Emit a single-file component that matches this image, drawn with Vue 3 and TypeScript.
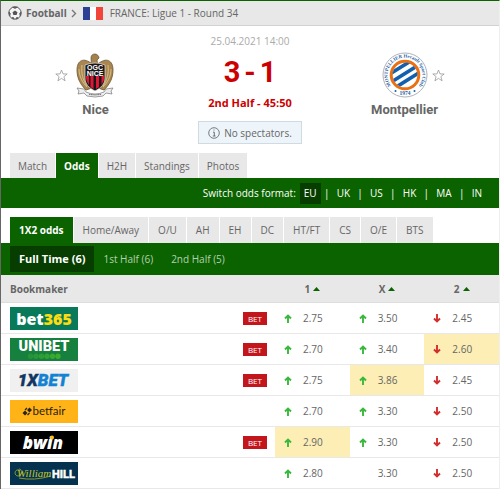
<script setup lang="ts">
import { ref } from 'vue'

type Direction = 'up' | 'down' | 'none'

interface Odd {
  value: string
  direction: Direction
  best?: boolean
}

interface BookmakerRow {
  id: string
  name: string
  bet: boolean
  odds: Odd[]
}

const mainTabs = ['Match', 'Odds', 'H2H', 'Standings', 'Photos']
const formats = ['EU', 'UK', 'US', 'HK', 'MA', 'IN']
const markets = ['1X2 odds', 'Home/Away', 'O/U', 'AH', 'EH', 'DC', 'HT/FT', 'CS', 'O/E', 'BTS']
const periods = ['Full Time (6)', '1st Half (6)', '2nd Half (5)']
const outcomes = ['1', 'X', '2']

const activeTab = ref('Odds')
const activeFormat = ref('EU')
const activeMarket = ref('1X2 odds')
const activePeriod = ref('Full Time (6)')

const up = (value: string, best = false): Odd => ({ value, direction: 'up', best })
const down = (value: string, best = false): Odd => ({ value, direction: 'down', best })
const same = (value: string): Odd => ({ value, direction: 'none' })

const rows: BookmakerRow[] = [
  { id: 'bet365', name: 'bet365', bet: true, odds: [up('2.75'), up('3.50'), down('2.45')] },
  { id: 'unibet', name: 'Unibet', bet: true, odds: [up('2.70'), up('3.40'), down('2.60', true)] },
  { id: 'xbet', name: '1xBet', bet: true, odds: [up('2.75'), up('3.86', true), down('2.45')] },
  { id: 'betfair', name: 'Betfair', bet: false, odds: [up('2.70'), up('3.30'), down('2.50')] },
  { id: 'bwin', name: 'bwin', bet: true, odds: [up('2.90', true), up('3.30'), down('2.50')] },
  { id: 'hill', name: 'William Hill', bet: false, odds: [up('2.80'), same('3.30'), down('2.50')] },
]
</script>

<template>
  <main class="page">
    <nav class="crumbs">
      <svg class="ball" viewBox="0 0 14 14" aria-hidden="true">
        <circle cx="7" cy="7" r="6.2" fill="#f4f4f4" stroke="#555" stroke-width="1" />
        <path d="M7 4.4 9.5 6.2 8.6 9.1H5.4L4.5 6.2Z" fill="#555" />
        <path d="M4.6 1.2 7 2.4 9.4 1.2ZM1 6 2.4 7.4 1.8 9.8ZM13 6 11.6 7.4 12.2 9.8ZM4 12.2 5 11 6 13ZM10 12.2 9 11 8 13Z" fill="#555" stroke="#555" stroke-width=".7" />
      </svg>
      <a href="#" class="sport">Football</a>
      <svg class="chevron" viewBox="0 0 6 9" aria-hidden="true">
        <path d="M1 1 4.5 4.5 1 8" fill="none" stroke="#777" stroke-width="1.4" />
      </svg>
      <svg class="flag" viewBox="0 0 20 13" aria-hidden="true">
        <rect width="20" height="13" fill="#fff" />
        <rect width="7" height="13" fill="#2b3f95" />
        <rect x="13" width="7" height="13" fill="#f1443a" />
      </svg>
      <span>FRANCE: <a href="#">Ligue 1 - Round 34</a></span>
    </nav>

    <section class="match">
      <div class="team">
        <div class="badge-line home">
          <button class="star" type="button" aria-label="Follow Nice">
            <svg viewBox="0 0 13 13"><path d="M6.5 1 8 4.9 12.2 5 8.9 7.6 10.1 11.8 6.5 9.4 2.9 11.8 4.1 7.6.8 5 5 4.9Z" fill="#fff" stroke="#999" stroke-width=".8" /></svg>
          </button>
          <svg class="crest" viewBox="0 0 46 46" aria-hidden="true">
            <path d="M20 12C12 5 5 8 5 18c0 9 4 15 9 20l6-2Z" fill="#a98650" stroke="#69512d" stroke-width=".8" />
            <path d="M26 12C34 5 41 8 41 18c0 9-4 15-9 20l-6-2Z" fill="#a98650" stroke="#69512d" stroke-width=".8" />
            <path d="M7 17c0 8 4 14 8 18M10 13c-1 9 1 15 5 21M39 17c0 8-4 14-8 18M36 13c1 9-1 15-5 21" fill="none" stroke="#ddc48f" stroke-width=".9" />
            <path d="M18 14c2-3 1-5 1-8 0-3 2-4 4-4s4 2 4 4l-2 2c0 3 2 4 3 6Z" fill="#a5824d" stroke="#634c2b" stroke-width=".7" />
            <path d="M13 13q10-4 20 0v13c0 6-4 10-10 13-6-3-10-7-10-13Z" fill="#191519" stroke="#f0e8dc" stroke-width=".7" />
            <path d="M14 24h3v9l-2-3-1-4ZM18.5 24h3v13l-3-2ZM24 24h3v11l-3 2ZM29.5 24h2.5v4l-2.5 5Z" fill="#df1735" />
            <text x="23" y="18" text-anchor="middle" font-size="7" font-weight="bold" fill="#fff">OGC</text>
            <text x="23" y="23.5" text-anchor="middle" font-size="7" font-weight="bold" fill="#fff">NICE</text>
            <path d="M5 36l7 1 2 3q9 4 18 0l2-3 7-1-2 3 1 3-6-1-3 3q-8 2-16 0l-3-3-6 1 1-3Z" fill="#eee" stroke="#777" stroke-width=".7" />
            <path d="M17 42.3q6 1 12 0" fill="none" stroke="#777" stroke-width="1.2" stroke-dasharray="1.5 .6" />
          </svg>
        </div>
        <a href="#" class="team-name">Nice</a>
      </div>

      <div class="result">
        <time class="kickoff">25.04.2021 14:00</time>
        <strong class="score"><span>3</span><span>-</span><span>1</span></strong>
        <strong class="status">2nd Half - 45:50</strong>
      </div>

      <div class="team">
        <div class="badge-line away">
          <svg class="crest" viewBox="0 0 46 46" aria-hidden="true">
            <defs>
              <path id="upper-arc" d="M10.6 35.4A17.5 17.5 0 1 1 35.4 35.4" />
              <clipPath id="crest-core"><circle cx="23" cy="23" r="12.4" /></clipPath>
            </defs>
            <circle cx="23" cy="23" r="22" fill="#fff" stroke="#aeb2b8" stroke-width="1" />
            <circle cx="23" cy="23" r="13.8" fill="#fff" stroke="#eb7012" stroke-width="3" />
            <g clip-path="url(#crest-core)" stroke="#1260ae" stroke-width="3.6">
              <path d="M3 25 32 7M3 34 40 11M8 39 43 17" />
            </g>
            <text class="crest-text" font-size="4.8" font-weight="bold" fill="#1d5da5">
              <textPath href="#upper-arc" startOffset="50%" text-anchor="middle">MONTPELLIER Herault Sport Club</textPath>
            </text>
            <text class="crest-text" x="23" y="43" text-anchor="middle" font-size="5.5" font-weight="bold" fill="#1d5da5">1974</text>
            <circle cx="13.5" cy="39" r="1" fill="#1260ae" />
            <circle cx="32.5" cy="39" r="1" fill="#1260ae" />
          </svg>
          <button class="star" type="button" aria-label="Follow Montpellier">
            <svg viewBox="0 0 13 13"><path d="M6.5 1 8 4.9 12.2 5 8.9 7.6 10.1 11.8 6.5 9.4 2.9 11.8 4.1 7.6.8 5 5 4.9Z" fill="#fff" stroke="#999" stroke-width=".8" /></svg>
          </button>
        </div>
        <a href="#" class="team-name">Montpellier</a>
      </div>
    </section>

    <p class="notice">
      <svg viewBox="0 0 12 12" aria-hidden="true">
        <circle cx="6" cy="6" r="5.3" fill="none" stroke="#667078" stroke-width=".9" />
        <path d="M5 5.2H6.3V9M4.8 9H7.5M5.5 3H6.5" fill="none" stroke="#667078" stroke-width="1" />
      </svg>
      <span>No spectators.</span>
    </p>

    <nav class="tabs main">
      <button v-for="tab in mainTabs" :key="tab" type="button" :class="{ active: tab === activeTab }" @click="activeTab = tab">{{ tab }}</button>
    </nav>

    <div class="formats">
      <span class="formats-label">Switch odds format:</span>
      <template v-for="(format, i) in formats" :key="format">
        <span v-if="i > 0" class="divider">|</span>
        <button type="button" :class="{ active: format === activeFormat }" @click="activeFormat = format">{{ format }}</button>
      </template>
    </div>

    <nav class="tabs markets">
      <button v-for="market in markets" :key="market" type="button" :class="{ active: market === activeMarket }" @click="activeMarket = market">{{ market }}</button>
    </nav>

    <nav class="periods">
      <button v-for="period in periods" :key="period" type="button" :class="{ active: period === activePeriod }" @click="activePeriod = period">{{ period }}</button>
    </nav>

    <table class="odds">
      <colgroup>
        <col />
        <col v-for="outcome in outcomes" :key="outcome" class="odd-col" />
      </colgroup>
      <thead>
        <tr>
          <th class="maker-head" scope="col">Bookmaker</th>
          <th v-for="outcome in outcomes" :key="outcome" scope="col">
            <a href="#" class="sort">
              {{ outcome }}
              <svg viewBox="0 0 7 4" aria-hidden="true"><path d="M0 4 3.5 0 7 4Z" fill="#0b6300" /></svg>
            </a>
          </th>
        </tr>
      </thead>
      <tbody>
        <tr v-for="row in rows" :key="row.id">
          <td>
            <div class="maker">
              <a href="#" :aria-label="row.name">
                <svg class="logo" viewBox="0 0 68 23">
                  <template v-if="row.id === 'bet365'">
                    <rect width="68" height="23" fill="#087a59" />
                    <text x="34" y="17.5" text-anchor="middle" font-size="16" font-weight="800" fill="#fff">bet<tspan fill="#fddd12">365</tspan></text>
                  </template>
                  <template v-else-if="row.id === 'unibet'">
                    <rect width="68" height="23" fill="#16803f" />
                    <text class="block" x="34" y="13" text-anchor="middle" font-size="14.5" font-weight="900" fill="#fff">UNIBET</text>
                    <circle v-for="n in 6" :key="n" :cx="15 + n * 5.5" cy="18.3" r="2.7" fill="#3fae2e" :opacity="0.3 + n * 0.11" />
                  </template>
                  <template v-else-if="row.id === 'xbet'">
                    <rect width="68" height="23" fill="#f0f0f0" />
                    <text class="block" x="33" y="17" text-anchor="middle" font-size="17" font-weight="900" font-style="italic" fill="#123663" stroke="#123663" stroke-width=".4">1X<tspan fill="#1482d2" stroke="#1482d2">BET</tspan></text>
                  </template>
                  <template v-else-if="row.id === 'betfair'">
                    <rect width="68" height="23" fill="#ffb317" />
                    <path d="M12.5 13 15 10.5 17.5 13 15 15.5ZM17 10 19.5 7.5 22 10 19.5 12.5Z" fill="#2b2313" />
                    <path d="M15 10 17 8M17.5 15 19.5 13" stroke="#2b2313" stroke-width="1.2" />
                    <text class="round" x="22.5" y="15" font-size="11.5" fill="#2b2313">betfair</text>
                  </template>
                  <template v-else-if="row.id === 'bwin'">
                    <rect width="68" height="23" fill="#000" />
                    <text x="33" y="18" text-anchor="middle" font-size="17" font-weight="800" font-style="italic" fill="#fff">bwin</text>
                    <circle cx="42" cy="6.5" r="2" fill="#ffc20e" />
                  </template>
                  <template v-else>
                    <rect width="68" height="23" fill="#05334f" />
                    <path d="M9 8c-5-1-5 6-1 6 4 0 5-7 1-7M9 16Q24 19 41 14" fill="none" stroke="#a6ad2c" stroke-width=".8" />
                    <text class="script" x="7" y="15" font-size="11" font-style="italic" fill="#c2c72c">William</text>
                    <text class="slab" x="42" y="16" font-size="11" font-weight="bold" fill="#fff" stroke="#fff" stroke-width=".5">HILL</text>
                  </template>
                </svg>
              </a>
              <a v-if="row.bet" href="#" class="bet">BET</a>
            </div>
          </td>
          <td v-for="(odd, i) in row.odds" :key="i" :class="{ best: odd.best }">
            <div class="odd">
              <svg class="arrow" :class="odd.direction" viewBox="0 0 8 9" aria-hidden="true">
                <path v-if="odd.direction !== 'none'" d="M4 9V2M1 4.5 4 1.5 7 4.5" fill="none" stroke="currentColor" stroke-width="1.9" />
              </svg>
              <span>{{ odd.value }}</span>
            </div>
          </td>
        </tr>
      </tbody>
    </table>
  </main>
</template>

<style>
body {
  background: #fff;
}
</style>

<style scoped>
.page {
  border: 1px solid #eee;
  border-top-color: #0b6300;
  border-left-color: #666;
  border-bottom: 0;
  color: #666;
  font: 10px/14px "Open Sans", "Noto Sans", sans-serif;
}

a {
  color: inherit;
  text-decoration: none;
}

button {
  margin: 0;
  border: 0;
  font: inherit;
  color: inherit;
  white-space: nowrap;
  cursor: pointer;
}

svg {
  display: block;
  flex: none;
}

.crumbs {
  display: flex;
  align-items: center;
  height: 24px;
  padding-left: 7px;
  background: #e8e8e8;
  border-bottom: 1px solid #d2d2d2;
}

.ball {
  width: 14px;
  height: 14px;
  margin-right: 4px;
}

.sport {
  font-weight: bold;
}

.chevron {
  width: 6px;
  height: 9px;
  margin: 0 6px 0 4px;
}

.flag {
  width: 20px;
  height: 13px;
  margin-right: 7px;
}

.match {
  display: grid;
  grid-template-columns: 1fr 120px 1fr;
  padding-top: 8px;
  text-align: center;
}

.team {
  padding-top: 18px;
}

.badge-line {
  display: flex;
  align-items: center;
  justify-content: center;
  gap: 4px;
  height: 46px;
}

.home {
  margin-right: 18px;
}

.away {
  margin-left: 18px;
}

.star {
  width: 13px;
  padding: 0;
  background: none;
}

.crest {
  width: 46px;
  height: 46px;
  font-family: "Liberation Sans", sans-serif;
}

.crest-text {
  font-family: "Liberation Serif", serif;
}

.team-name {
  display: block;
  font: bold 13px/20px Roboto, sans-serif;
  padding-top: 2px;
}

.result {
  display: flex;
  flex-direction: column;
  align-items: center;
}

.kickoff {
  color: #aaa;
}

.score {
  display: flex;
  gap: 4px;
  margin-top: 8px;
  font: bold 29px/32px Roboto, sans-serif;
  color: #c00;
}

.status {
  margin-top: 8px;
  font-size: 11px;
  color: #c00;
}

.notice {
  display: flex;
  align-items: center;
  justify-content: center;
  gap: 4px;
  width: fit-content;
  height: 21px;
  margin: 1px auto 9px;
  padding: 0 9px;
  border: 1px solid #cedbe2;
  background: #edf5fa;
}

.notice svg {
  width: 12px;
  height: 12px;
}

.tabs {
  display: flex;
  gap: 1px;
  padding-left: 9px;
}

.tabs button {
  padding: 0 9px;
  background: #e8e8e8;
}

.tabs .active {
  background: #0b6300;
  color: #fff;
  font-weight: bold;
}

.main button {
  height: 25px;
  padding: 0 8px;
}

.markets {
  padding-top: 9px;
}

.markets button {
  height: 26px;
}

.formats {
  display: flex;
  align-items: center;
  justify-content: flex-end;
  height: 30px;
  padding-right: 13px;
  background: #0b6300;
  color: #fff;
}

.formats-label {
  margin-right: 4px;
}

.formats button {
  height: 21px;
  padding: 0 4px;
  background: none;
}

.formats .active {
  background: #083d00;
}

.divider {
  width: 12px;
  text-align: center;
}

.periods {
  display: flex;
  align-items: center;
  height: 32px;
  padding-left: 9px;
  background: #0b6300;
  color: #b5d0b2;
}

.periods button {
  height: 26px;
  padding: 0 9px;
  background: none;
}

.periods .active {
  background: #083d00;
  color: #fff;
  font-size: 11px;
  font-weight: bold;
}

.odds {
  width: 100%;
  border-collapse: collapse;
  table-layout: fixed;
}

.odd-col {
  width: 15%;
}

.odds th {
  height: 27px;
  padding: 0;
  background: #e8e8e8;
  border-bottom: 1px solid #ddd;
}

.odds .maker-head {
  padding-left: 9px;
  text-align: left;
}

.sort {
  display: flex;
  align-items: center;
  justify-content: center;
  gap: 3px;
}

.sort svg {
  width: 7px;
  height: 4px;
}

.odds td {
  height: 30px;
  padding: 0;
  border-bottom: 1px solid #e8e8e8;
}

.odds .best {
  background: #fceeb5;
}

.maker {
  display: flex;
  align-items: center;
  justify-content: space-between;
  padding: 0 8px 0 9px;
}

.logo {
  width: 68px;
  height: 23px;
}

.block {
  font-family: Roboto, sans-serif;
}

.round {
  font-family: Lato, sans-serif;
}

.script {
  font-family: "Liberation Serif", serif;
}

.slab {
  font-family: Roboto, sans-serif;
}

.bet {
  padding: 0 5px;
  background: #c3151c;
  color: #fff;
  font-size: 8px;
  line-height: 13px;
}

.odd {
  display: flex;
  align-items: center;
  gap: 11px;
  padding-left: 9px;
}

.arrow {
  width: 8px;
  height: 9px;
}

.up {
  color: #3ab83d;
}

.down {
  color: #d12e2e;
  transform: rotate(180deg);
}
</style>
